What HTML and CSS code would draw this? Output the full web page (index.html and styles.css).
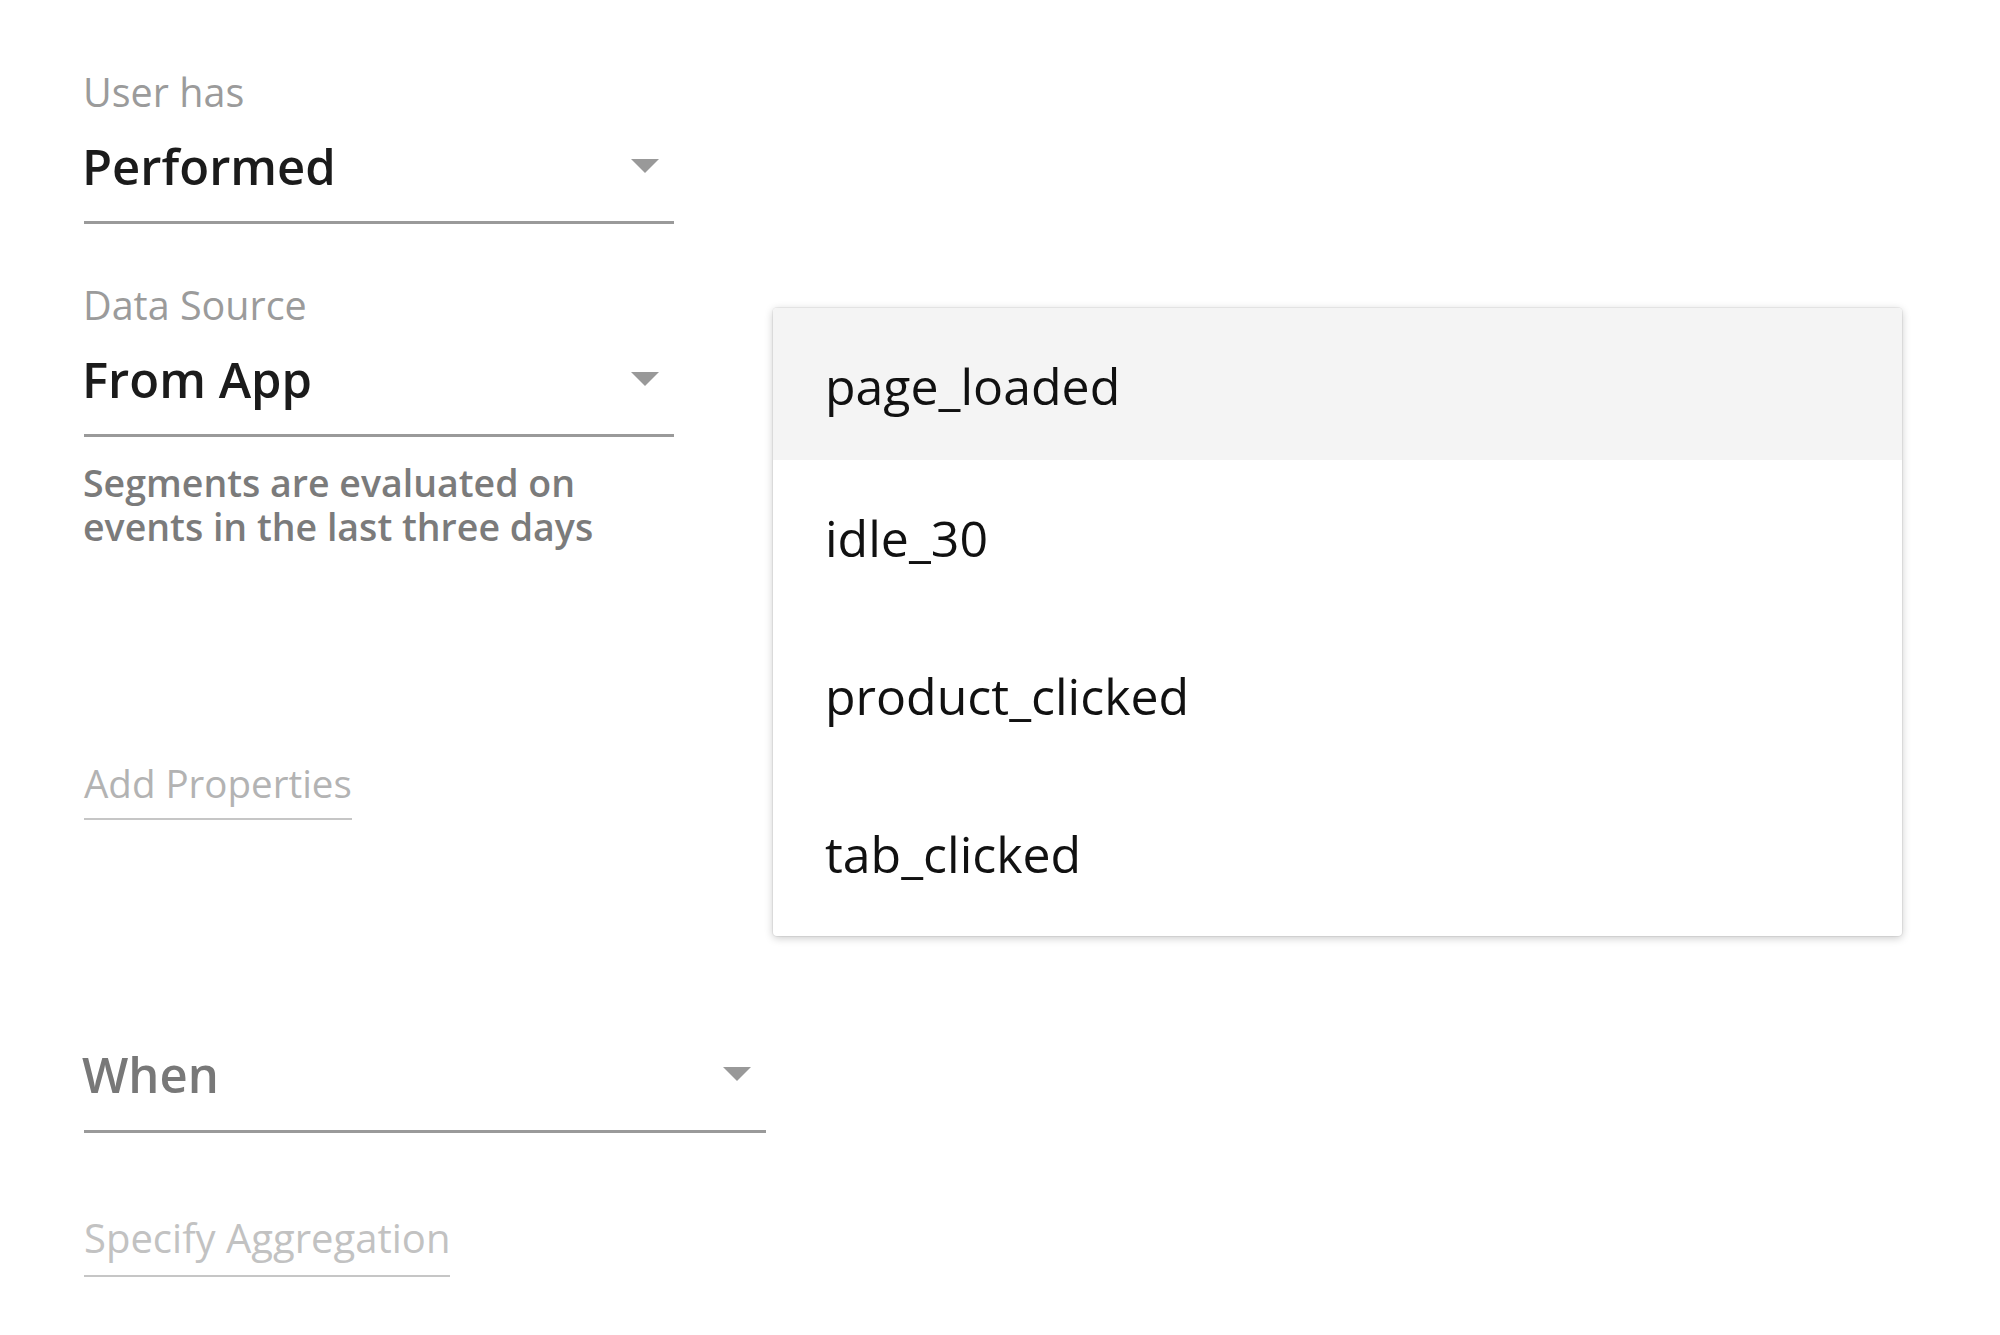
FILE: index.html
```html
<!DOCTYPE html>
<html lang="en">
<head>
<meta charset="utf-8">
<title>Segment condition</title>
<link rel="stylesheet" href="styles.css">
</head>
<body>
<main class="page">
  <section class="form">
    <div class="field">
      <div class="label">User has</div>
      <div class="select select--narrow">
        <span class="value">Performed</span>
        <span class="caret"></span>
      </div>
    </div>

    <div class="field field--next">
      <div class="label">Data Source</div>
      <div class="select select--narrow">
        <span class="value">From App</span>
        <span class="caret"></span>
      </div>
      <p class="helper">Segments are evaluated on<br>events in the last three days</p>
    </div>

    <div class="link-row link-row--props">
      <span class="link">Add Properties</span>
    </div>

    <div class="select select--wide select--placeholder">
      <span class="value">When</span>
      <span class="caret"></span>
    </div>

    <div class="link-row link-row--agg">
      <span class="link">Specify Aggregation</span>
    </div>
  </section>

  <ul class="menu">
    <li class="menu-item menu-item--active">page_loaded</li>
    <li class="menu-item">idle_30</li>
    <li class="menu-item">product_clicked</li>
    <li class="menu-item">tab_clicked</li>
  </ul>
</main>
</body>
</html>
```

FILE: styles.css
```css
html, body {
  margin: 0;
  padding: 0;
  background: #ffffff;
}

body {
  font-family: "Open Sans", "Noto Sans", "Liberation Sans", sans-serif;
  width: 2000px;
  height: 1335px;
  overflow: hidden;
}

.page {
  position: relative;
  width: 2000px;
  height: 1335px;
}

.form {
  display: flex;
  flex-direction: column;
  align-items: flex-start;
  padding: 66px 0 0 84px;
}

.field {
  display: flex;
  flex-direction: column;
  align-items: flex-start;
}

.field--next {
  margin-top: 55px;
}

.label {
  font-size: 39.5px;
  line-height: 52px;
  color: #9b9b9b;
  font-weight: 400;
  margin-left: -1px;
}

.select {
  display: flex;
  align-items: center;
  justify-content: space-between;
  box-sizing: border-box;
  margin-top: 14px;
  padding: 0 15px 21px 0;
  border-bottom: 3px solid #9a9a9a;
}

.select--narrow {
  width: 590px;
}

.select--wide {
  width: 682px;
  margin-top: 221px;
  padding-bottom: 23px;
}

.value {
  font-size: 49px;
  line-height: 68px;
  font-weight: 600;
  color: #1b1b1b;
  margin-left: -2px;
}

.select--placeholder .value {
  font-size: 49px;
  line-height: 66px;
  color: #787878;
}

.caret {
  width: 0;
  height: 0;
  border-left: 14px solid transparent;
  border-right: 14px solid transparent;
  border-top: 14px solid #999999;
}

.helper {
  margin: 24px 0 0 0;
  font-size: 37.5px;
  line-height: 44px;
  font-weight: 600;
  color: #7b7b7b;
  margin-left: -1px;
}

.link-row--props {
  margin-top: 208px;
}

.link-row--agg {
  margin-top: 79px;
}

.link {
  display: inline-block;
  font-size: 38.5px;
  line-height: 52px;
  font-weight: 400;
  color: #b3b3b3;
  padding-bottom: 9px;
  border-bottom: 2px solid #c6c6c6;
}

.link-row--agg .link {
  font-size: 40px;
  color: #c2c2c2;
  padding-bottom: 11px;
}

.menu {
  position: absolute;
  left: 773px;
  top: 308px;
  width: 1129px;
  margin: 0;
  padding: 0 0 2px 0;
  list-style: none;
  background: #ffffff;
  border-radius: 4px;
  overflow: hidden;
  box-shadow: 0 0 0 1px rgba(0, 0, 0, 0.05), 0 2px 8px rgba(0, 0, 0, 0.22);
}

.menu-item {
  box-sizing: border-box;
  height: 158px;
  padding: 44px 0 0 52px;
  font-size: 50px;
  line-height: 68px;
  font-weight: 400;
  color: #111111;
}

.menu-item--active {
  height: 152px;
  background: #f4f4f4;
}
```
